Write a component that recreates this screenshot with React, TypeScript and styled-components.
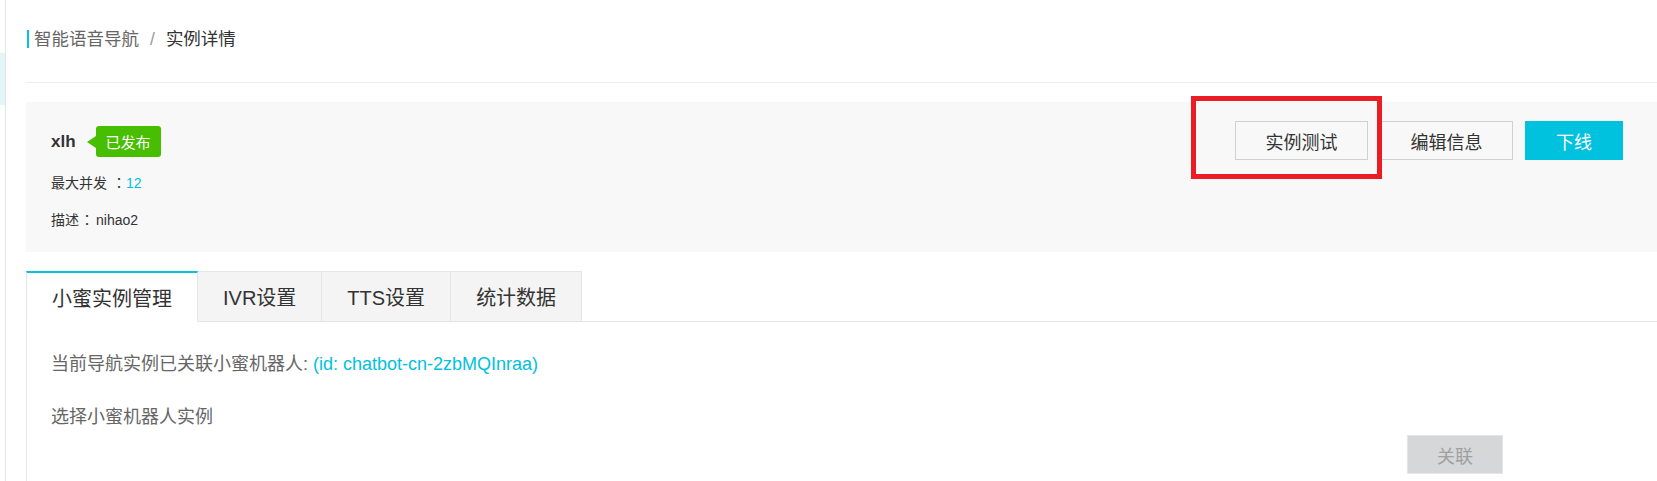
import React from 'react'
import styled, { createGlobalStyle } from 'styled-components'

const GlobalStyle = createGlobalStyle`
  html, body, #root {
    height: 100%;
  }
  body {
    margin: 0;
    overflow: hidden;
    background: #fff;
    font-family: "Liberation Sans", "Noto Sans CJK SC", sans-serif;
    color: #333;
  }
`

const Page = styled.div`
  display: flex;
  height: 100%;
`

const Sidebar = styled.div`
  width: 5px;
  flex-shrink: 0;
  border-right: 1px solid #e5e5e5;
  padding-top: 53px;
`

const SideItem = styled.div`
  height: 52px;
  background: #e2f6fa;
  border-top: 1px solid #eceff0;
  box-sizing: border-box;
`

const Main = styled.div`
  flex: 1;
  padding-left: 20px;
  display: flex;
  flex-direction: column;
`

const Breadcrumb = styled.div`
  height: 83px;
  box-sizing: border-box;
  padding: 30px 0 0 1px;
  border-bottom: 1px solid #eeeeee;
  display: flex;
  align-items: flex-start;
  font-size: 17.5px;
  line-height: 18px;
`

const CrumbBar = styled.span`
  width: 2px;
  height: 18px;
  background: #00c1de;
  margin-right: 5px;
`

const CrumbLink = styled.span`
  color: #666;
`

const CrumbSep = styled.span`
  color: #999;
  margin: 0 11px;
`

const CrumbCurrent = styled.span`
  color: #333;
`

const Panel = styled.div`
  margin-top: 19px;
  height: 150px;
  background: #f8f8f8;
  display: flex;
  justify-content: space-between;
  padding: 0 34px 0 25px;
`

const Info = styled.div`
  padding-top: 24px;
  display: flex;
  flex-direction: column;
`

const TitleRow = styled.div`
  display: flex;
  align-items: center;
  height: 31px;
`

const Name = styled.span`
  font-size: 17px;
  font-weight: bold;
  color: #333;
`

const StatusTag = styled.span`
  position: relative;
  margin-left: 20px;
  height: 31px;
  padding: 0 10px;
  display: flex;
  align-items: center;
  background: #48be00;
  color: #fff;
  font-size: 15px;
  border-radius: 3px;

  &::before {
    content: '';
    position: absolute;
    left: -9px;
    top: 50%;
    margin-top: -6px;
    border-style: solid;
    border-width: 6px 9px 6px 0;
    border-color: transparent #48be00 transparent transparent;
  }
`

const Meta = styled.div<{ $gap: number }>`
  margin-top: ${(p) => p.$gap}px;
  font-size: 14px;
  line-height: 20px;
  color: #333;
`

const Colon = styled.span<{ $before: number; $after: number }>`
  font-family: "Noto Sans CJK TC", sans-serif;
  margin-left: ${(p) => p.$before}px;
  margin-right: ${(p) => p.$after}px;
`

const Accent = styled.span`
  color: #00c1de;
`

const Actions = styled.div`
  margin-top: 19px;
  display: flex;
  gap: 12px;
  align-items: flex-start;
`

const ButtonWrap = styled.div`
  position: relative;
`

const Button = styled.button<{ $primary?: boolean; $width: number }>`
  width: ${(p) => p.$width}px;
  height: 39px;
  font-family: inherit;
  font-size: 18px;
  border: 1px solid ${(p) => (p.$primary ? '#00c1de' : '#d0d0d0')};
  background: ${(p) => (p.$primary ? '#00c1de' : 'transparent')};
  color: ${(p) => (p.$primary ? '#fff' : '#333')};
  padding: 0;
  cursor: pointer;
`

const Highlight = styled.div`
  position: absolute;
  left: -44px;
  top: -25px;
  width: 191px;
  height: 83px;
  box-sizing: border-box;
  border: 5px solid #ec1c24;
  pointer-events: none;
`

const TabBar = styled.div`
  margin-top: 19px;
  display: flex;
  border-bottom: 1px solid #e5e5e5;
`

const Tab = styled.div<{ $active?: boolean }>`
  height: 51px;
  box-sizing: border-box;
  margin-bottom: -1px;
  padding: 0 25px;
  display: flex;
  align-items: center;
  font-size: 20px;
  color: #333;
  background: ${(p) => (p.$active ? '#fff' : '#f4f4f4')};
  border: 1px solid #e5e5e5;
  border-left-width: ${(p) => (p.$active ? 1 : 0)}px;
  border-top: ${(p) => (p.$active ? '2px solid #00c1de' : '1px solid #e5e5e5')};
  border-bottom-color: ${(p) => (p.$active ? '#fff' : '#e5e5e5')};
`

const Content = styled.div`
  flex: 1;
  border-left: 1px solid #e8e8e8;
  padding: 30px 0 0 24px;
  font-size: 18px;
  line-height: 24px;
  color: #666;
`

const Line = styled.div<{ $gap?: number }>`
  margin-top: ${(p) => p.$gap ?? 0}px;
`

const FormActions = styled.div`
  margin-top: 6px;
  display: flex;
  justify-content: flex-end;
  padding-right: 154px;
`

const DisabledButton = styled.button`
  width: 96px;
  height: 39px;
  background: #d6d7d9;
  border: 1px solid #e6e6e6;
  color: #a0a0a0;
  font-family: inherit;
  font-size: 18px;
  padding: 0;
`

const tabs = ['小蜜实例管理', 'IVR设置', 'TTS设置', '统计数据']

export default function App() {
  return (
    <Page>
      <GlobalStyle />
      <Sidebar>
        <SideItem />
      </Sidebar>
      <Main>
        <Breadcrumb>
          <CrumbBar />
          <CrumbLink>智能语音导航</CrumbLink>
          <CrumbSep>/</CrumbSep>
          <CrumbCurrent>实例详情</CrumbCurrent>
        </Breadcrumb>

        <Panel>
          <Info>
            <TitleRow>
              <Name>xlh</Name>
              <StatusTag>已发布</StatusTag>
            </TitleRow>
            <Meta $gap={15}>
              最大并发<Colon $before={5} $after={0}>：</Colon>
              <Accent>12</Accent>
            </Meta>
            <Meta $gap={16}>
              描述<Colon $before={1} $after={2}>：</Colon>nihao2
            </Meta>
          </Info>
          <Actions>
            <ButtonWrap>
              <Button $width={133}>实例测试</Button>
              <Highlight />
            </ButtonWrap>
            <Button $width={133}>编辑信息</Button>
            <Button $width={98} $primary>
              下线
            </Button>
          </Actions>
        </Panel>

        <TabBar>
          {tabs.map((t, i) => (
            <Tab key={t} $active={i === 0}>
              {t}
            </Tab>
          ))}
        </TabBar>

        <Content>
          <Line>
            当前导航实例已关联小蜜机器人: <Accent>(id: chatbot-cn-2zbMQInraa)</Accent>
          </Line>
          <Line $gap={29}>选择小蜜机器人实例</Line>
          <FormActions>
            <DisabledButton disabled>关联</DisabledButton>
          </FormActions>
        </Content>
      </Main>
    </Page>
  )
}
